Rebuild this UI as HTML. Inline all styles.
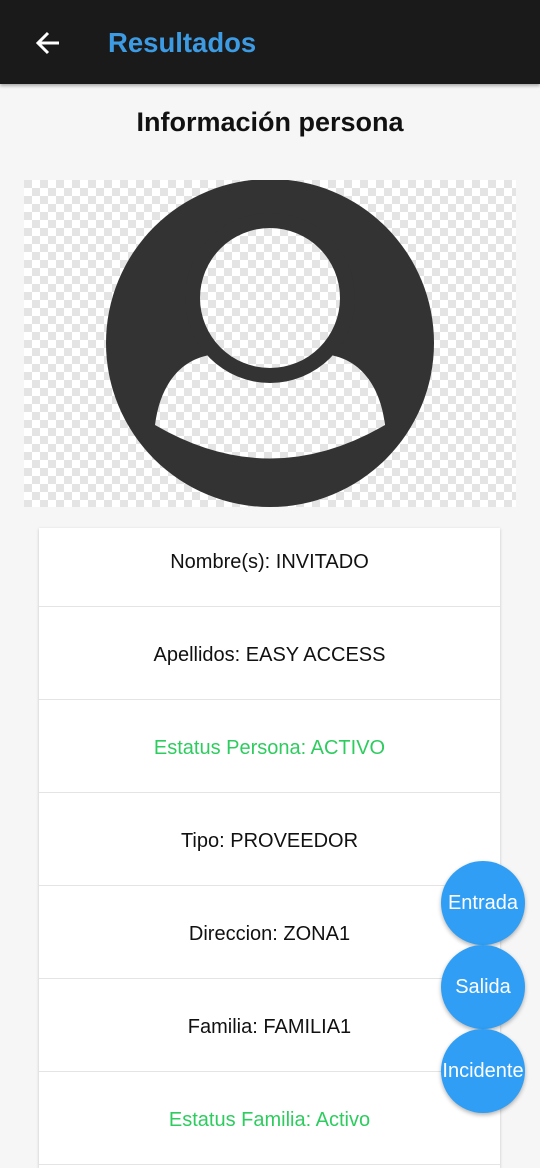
<!DOCTYPE html>
<html><head><meta charset="utf-8"><style>
body{margin:0;width:540px;height:1128px;overflow:hidden;background:#f6f6f6;font-family:"Liberation Sans",sans-serif;position:relative}
.bar{position:absolute;left:0;top:0;width:540px;height:84px;background:#1a1a1a;box-shadow:0 2px 3px rgba(0,0,0,.3)}
.bar .t{position:absolute;left:108px;top:27px;font-size:27.5px;font-weight:bold;color:#3d9be3}
.h{position:absolute;top:107px;width:540px;text-align:center;font-size:27px;font-weight:bold;color:#111}
.card{position:absolute;left:39px;top:528px;width:461px;height:640px;background:#fff;box-shadow:0 1px 3px rgba(0,0,0,.2)}
.r{border-bottom:1px solid #e4e4e4;height:92px;line-height:96px;text-align:center;font-size:20px;color:#111}
.r:first-child{height:78px;line-height:68px}
.g{color:#2ecc5f}
.fab{position:absolute;left:441px;width:84px;height:84px;border-radius:50%;background:#2f9ef4;color:#fff;font-size:20px;text-align:center;line-height:84px;box-shadow:0 2px 4px rgba(0,0,0,.3)}
</style></head><body>
<div class="bar"><svg style="position:absolute;left:34px;top:29px" width="28" height="28" viewBox="0 0 28 28"><path d="M25 14H4M14 4L4 14l10 10" stroke="#fff" stroke-width="3" fill="none"/></svg><div class="t">Resultados</div></div>
<div class="h">Información persona</div>
<svg style="position:absolute;left:24px;top:180px" width="492" height="327" viewBox="24 180 492 327">
<defs><pattern id="c" x="24" y="180" width="16" height="16" patternUnits="userSpaceOnUse"><rect width="16" height="16" fill="#fff"/><rect width="8" height="8" fill="#e4e4e4"/><rect x="8" y="8" width="8" height="8" fill="#e4e4e4"/></pattern></defs>
<rect x="24" y="180" width="492" height="327" fill="url(#c)"/>
<circle cx="270" cy="343" r="164" fill="#333"/>
<path d="M155,425 C160,385 180,360 210,355 L330,355 C360,360 380,385 385,425 Q270,492 155,425Z" fill="url(#c)"/>
<circle cx="270" cy="298" r="85" fill="#333"/>
<circle cx="270" cy="298" r="70" fill="url(#c)"/>
</svg>
<div class="card">
<div class="r">Nombre(s): INVITADO</div>
<div class="r">Apellidos: EASY ACCESS</div>
<div class="r g">Estatus Persona: ACTIVO</div>
<div class="r">Tipo: PROVEEDOR</div>
<div class="r">Direccion: ZONA1</div>
<div class="r">Familia: FAMILIA1</div>
<div class="r g">Estatus Familia: Activo</div>
</div>
<div class="fab" style="top:861px">Entrada</div>
<div class="fab" style="top:945px">Salida</div>
<div class="fab" style="top:1029px">Incidente</div>
</body></html>
